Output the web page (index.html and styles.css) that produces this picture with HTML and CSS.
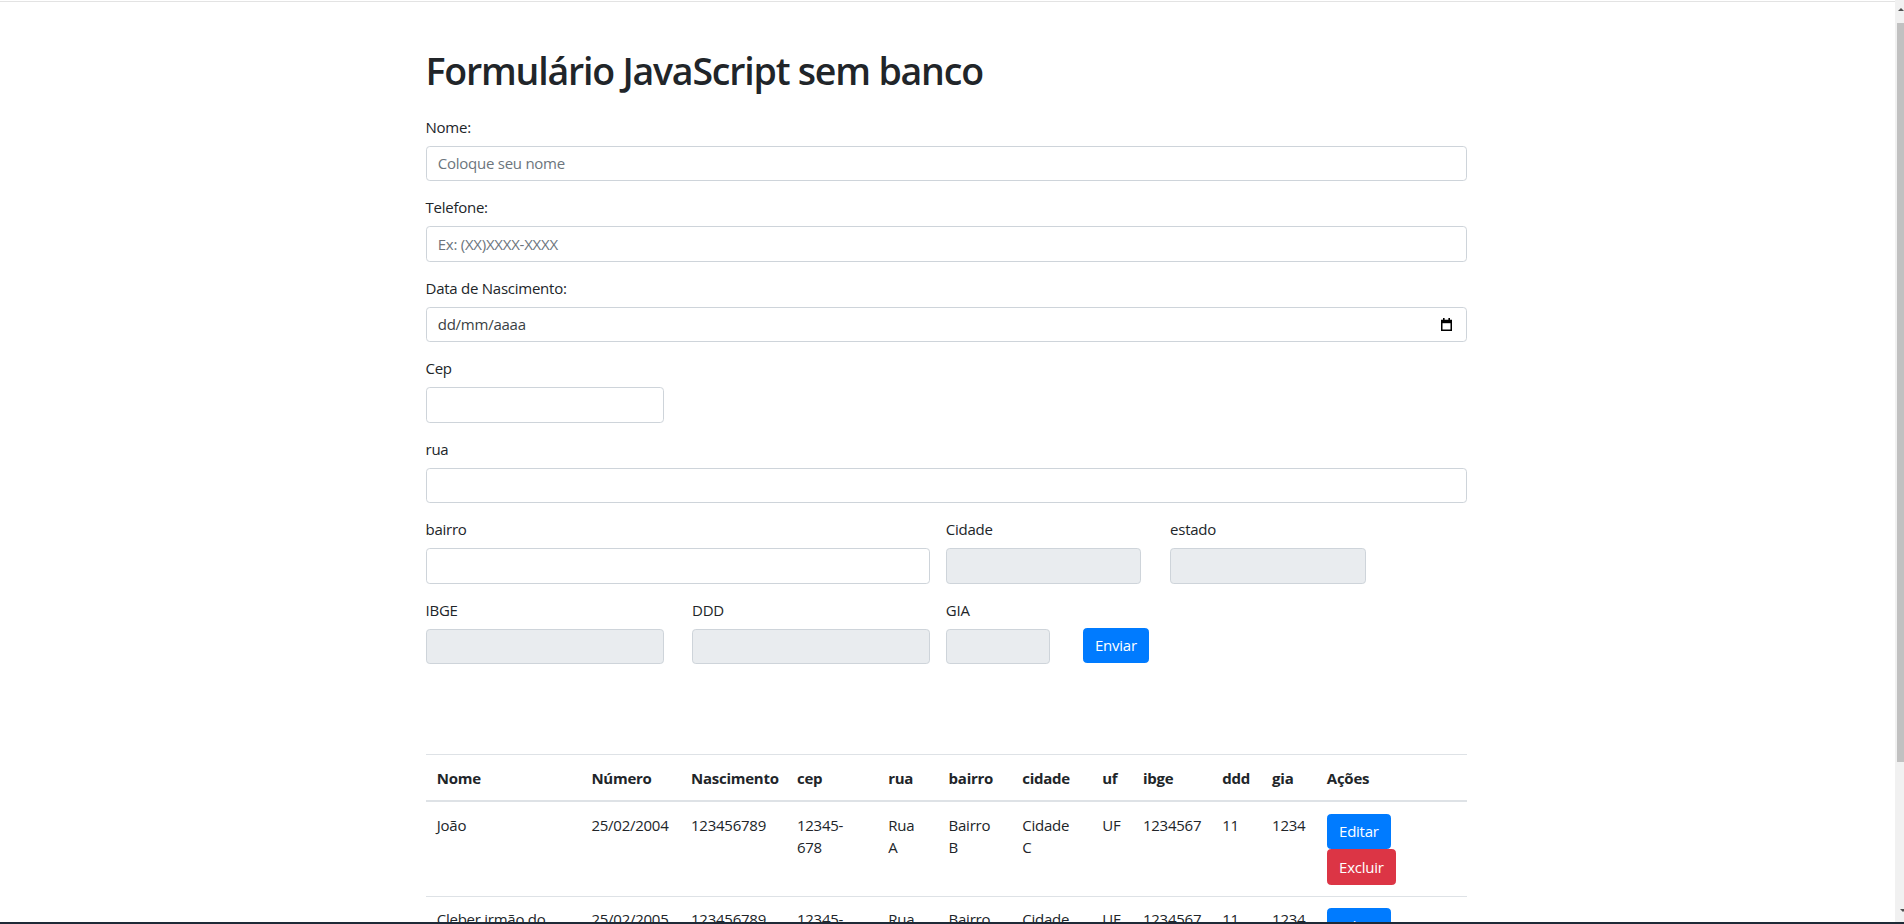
FILE: index.html
```html
<!DOCTYPE html>
<html lang="pt-BR">
<head>
<meta charset="utf-8">
<title>Formulário JavaScript sem banco</title>
<link rel="stylesheet" href="styles.css">
</head>
<body>
<div class="screen">
  <div class="window">
    <div class="viewport">
      <div class="container">
        <h1 class="title">Formulário JavaScript sem banco</h1>
        <form class="form">
          <div class="form-group">
            <label class="form-label" for="nome">Nome:</label>
            <input class="form-control" id="nome" type="text" placeholder="Coloque seu nome">
          </div>
          <div class="form-group">
            <label class="form-label" for="telefone">Telefone:</label>
            <input class="form-control" id="telefone" type="text" placeholder="Ex: (XX)XXXX-XXXX">
          </div>
          <div class="form-group">
            <label class="form-label" for="nascimento">Data de Nascimento:</label>
            <div class="form-control date-control" id="nascimento">
              <span class="date-text">dd/mm/aaaa</span>
              <svg class="date-icon" width="11" height="13" viewBox="0 0 11 13">
                <rect x="2" y="0" width="1.6" height="2.5" fill="#000"/>
                <rect x="7.4" y="0" width="1.6" height="2.5" fill="#000"/>
                <path d="M0.75 2.5 H10.25 V12.25 H0.75 Z" fill="none" stroke="#000" stroke-width="1.5"/>
                <rect x="0" y="2" width="11" height="3.2" fill="#000"/>
              </svg>
            </div>
          </div>
          <div class="form-group">
            <label class="form-label" for="cep">Cep</label>
            <input class="form-control cep-input" id="cep" type="text">
          </div>
          <div class="form-group">
            <label class="form-label" for="rua">rua</label>
            <input class="form-control" id="rua" type="text">
          </div>
          <div class="form-row">
            <div class="form-group col-bairro">
              <label class="form-label" for="bairro">bairro</label>
              <input class="form-control" id="bairro" type="text">
            </div>
            <div class="form-group col-cidade">
              <label class="form-label" for="cidade">Cidade</label>
              <input class="form-control is-readonly" id="cidade" type="text" readonly>
            </div>
            <div class="form-group col-estado">
              <label class="form-label" for="estado">estado</label>
              <input class="form-control is-readonly" id="estado" type="text" readonly>
            </div>
          </div>
          <div class="form-row">
            <div class="form-group col-ibge">
              <label class="form-label" for="ibge">IBGE</label>
              <input class="form-control is-readonly" id="ibge" type="text" readonly>
            </div>
            <div class="form-group col-ddd">
              <label class="form-label" for="ddd">DDD</label>
              <input class="form-control is-readonly" id="ddd" type="text" readonly>
            </div>
            <div class="form-group col-gia">
              <label class="form-label" for="gia">GIA</label>
              <input class="form-control is-readonly" id="gia" type="text" readonly>
            </div>
            <div class="form-group col-submit">
              <button class="btn btn-primary" type="button">Enviar</button>
            </div>
          </div>
        </form>

        <table class="table">
          <colgroup>
            <col class="c-nome"><col class="c-numero"><col class="c-nasc"><col class="c-cep">
            <col class="c-rua"><col class="c-bairro"><col class="c-cidade"><col class="c-uf">
            <col class="c-ibge"><col class="c-ddd"><col class="c-gia"><col class="c-acoes">
          </colgroup>
          <thead>
            <tr>
              <th>Nome</th><th>Número</th><th>Nascimento</th><th>cep</th><th>rua</th><th>bairro</th>
              <th>cidade</th><th>uf</th><th>ibge</th><th>ddd</th><th>gia</th><th>Ações</th>
            </tr>
          </thead>
          <tbody>
            <tr>
              <td>João</td><td>25/02/2004</td><td>123456789</td><td>12345-678</td><td>Rua A</td><td>Bairro B</td>
              <td>Cidade C</td><td>UF</td><td>1234567</td><td>11</td><td>1234</td>
              <td><div class="actions"><button class="btn btn-primary" type="button">Editar</button><button class="btn btn-danger" type="button">Excluir</button></div></td>
            </tr>
            <tr>
              <td>Cleber irmão do João</td><td>25/02/2005</td><td>123456789</td><td>12345-678</td><td>Rua A</td><td>Bairro B</td>
              <td>Cidade C</td><td>UF</td><td>1234567</td><td>11</td><td>1234</td>
              <td><div class="actions"><button class="btn btn-primary" type="button">Editar</button><button class="btn btn-danger" type="button">Excluir</button></div></td>
            </tr>
          </tbody>
        </table>
      </div>
    </div>
    <div class="scrollbar">
      <div class="sb-arrow-area"><span class="sb-up"></span></div>
      <div class="sb-thumb"></div>
      <div class="sb-rest"><span class="sb-down"></span></div>
    </div>
  </div>
  <div class="taskbar-edge"></div>
</div>
</body>
</html>
```

FILE: styles.css
```css
* { box-sizing: border-box; }

html, body {
  margin: 0;
  padding: 0;
  height: 100%;
  overflow: hidden;
  background: #fff;
}

body {
  font-family: "Open Sans", "Noto Sans", "Liberation Sans", sans-serif;
  font-size: 15px;
  line-height: 22.5px;
  letter-spacing: -0.25px;
  color: #212529;
}

.screen {
  height: 924px;
  display: flex;
  flex-direction: column;
}

.window {
  flex: 1;
  display: flex;
  min-height: 0;
}

.viewport {
  flex: 1;
  min-width: 0;
  overflow: hidden;
  margin-top: 1px;
  border-top: 1px solid #e3e3e3;
  padding-right: 3px;
}

.container {
  width: 1041px;
  margin: 0 auto;
  padding-top: 46px;
}

.title {
  margin: 0 0 22.7px;
  font-size: 37.5px;
  line-height: 45px;
  font-weight: 600;
  letter-spacing: -1.2px;
  color: #212529;
}

.form-group {
  margin-bottom: 15px;
}

.form-label {
  display: block;
  margin-bottom: 7.5px;
  line-height: 22.5px;
}

.form-control {
  display: block;
  width: 100%;
  height: 35.5px;
  padding: 5.6px 11.25px;
  font-family: inherit;
  font-size: 15px;
  line-height: 22.5px;
  letter-spacing: -0.25px;
  color: #495057;
  background: #fff;
  border: 1px solid #ced4da;
  border-radius: 3.75px;
  outline: none;
}

.form-control::placeholder {
  color: #6c757d;
  opacity: 1;
}

.form-control.is-readonly {
  background: #e9ecef;
}

.date-control {
  display: flex;
  align-items: center;
  justify-content: space-between;
  padding-right: 14px;
}

.date-text {
  color: #3a3f44;
}

.date-icon {
  display: block;
  flex: none;
}

.cep-input {
  width: 238px;
}

.form-row {
  display: flex;
  align-items: flex-start;
}

.col-bairro { width: 504.7px; margin-right: 15.6px; }
.col-cidade { width: 195.7px; margin-right: 28.6px; }
.col-estado { width: 196.4px; }

.col-ibge { width: 238px; margin-right: 28.6px; }
.col-ddd  { width: 238.1px; margin-right: 15.6px; }
.col-gia  { width: 104.7px; margin-right: 32.3px; }
.col-submit { padding-top: 29px; }

.btn {
  display: inline-block;
  height: 35.6px;
  padding: 5.6px 11.25px;
  font-family: inherit;
  font-size: 15px;
  line-height: 22.5px;
  letter-spacing: -0.25px;
  font-weight: 400;
  color: #fff;
  border: 1px solid transparent;
  border-radius: 3.75px;
  cursor: pointer;
}

.btn-primary {
  background: #007bff;
  border-color: #007bff;
}

.btn-danger {
  background: #dc3545;
  border-color: #dc3545;
}

.table {
  width: 100%;
  margin-top: 75.3px;
  border-collapse: collapse;
  table-layout: fixed;
  color: #212529;
}

.table th,
.table td {
  padding: 11.25px;
  text-align: left;
  vertical-align: top;
  border-top: 1px solid #dee2e6;
  line-height: 22.5px;
}

.table thead th {
  vertical-align: bottom;
  border-bottom: 2px solid #dee2e6;
  font-weight: 700;
}

.c-nome { width: 154.6px; }
.c-numero { width: 99.6px; }
.c-nasc { width: 105.9px; }
.c-cep { width: 91.2px; }
.c-rua { width: 60.4px; }
.c-bairro { width: 73.6px; }
.c-cidade { width: 80px; }
.c-uf { width: 40.7px; }
.c-ibge { width: 79.3px; }
.c-ddd { width: 49.8px; }
.c-gia { width: 54.7px; }
.c-acoes { width: 150.8px; }

.actions {
  display: flex;
  flex-direction: column;
  align-items: flex-start;
}

.scrollbar {
  width: 9px;
  flex: none;
  background: #f1f1f1;
  display: flex;
  flex-direction: column;
}

.sb-arrow-area {
  height: 23px;
  position: relative;
}

.sb-up {
  position: absolute;
  right: 0;
  top: 8px;
  width: 0;
  height: 0;
  border-left: 3px solid transparent;
  border-right: 3px solid transparent;
  border-bottom: 3px solid #505050;
}

.sb-thumb {
  height: 739px;
  margin-left: 2px;
  background: #c1c1c1;
}

.sb-rest {
  flex: 1;
  position: relative;
}

.sb-down {
  position: absolute;
  right: -2px;
  bottom: 10px;
  width: 0;
  height: 0;
  border-left: 3px solid transparent;
  border-right: 3px solid transparent;
  border-top: 3px solid #505050;
}

.taskbar-edge {
  height: 2px;
  background: #1f2a37;
}
```
